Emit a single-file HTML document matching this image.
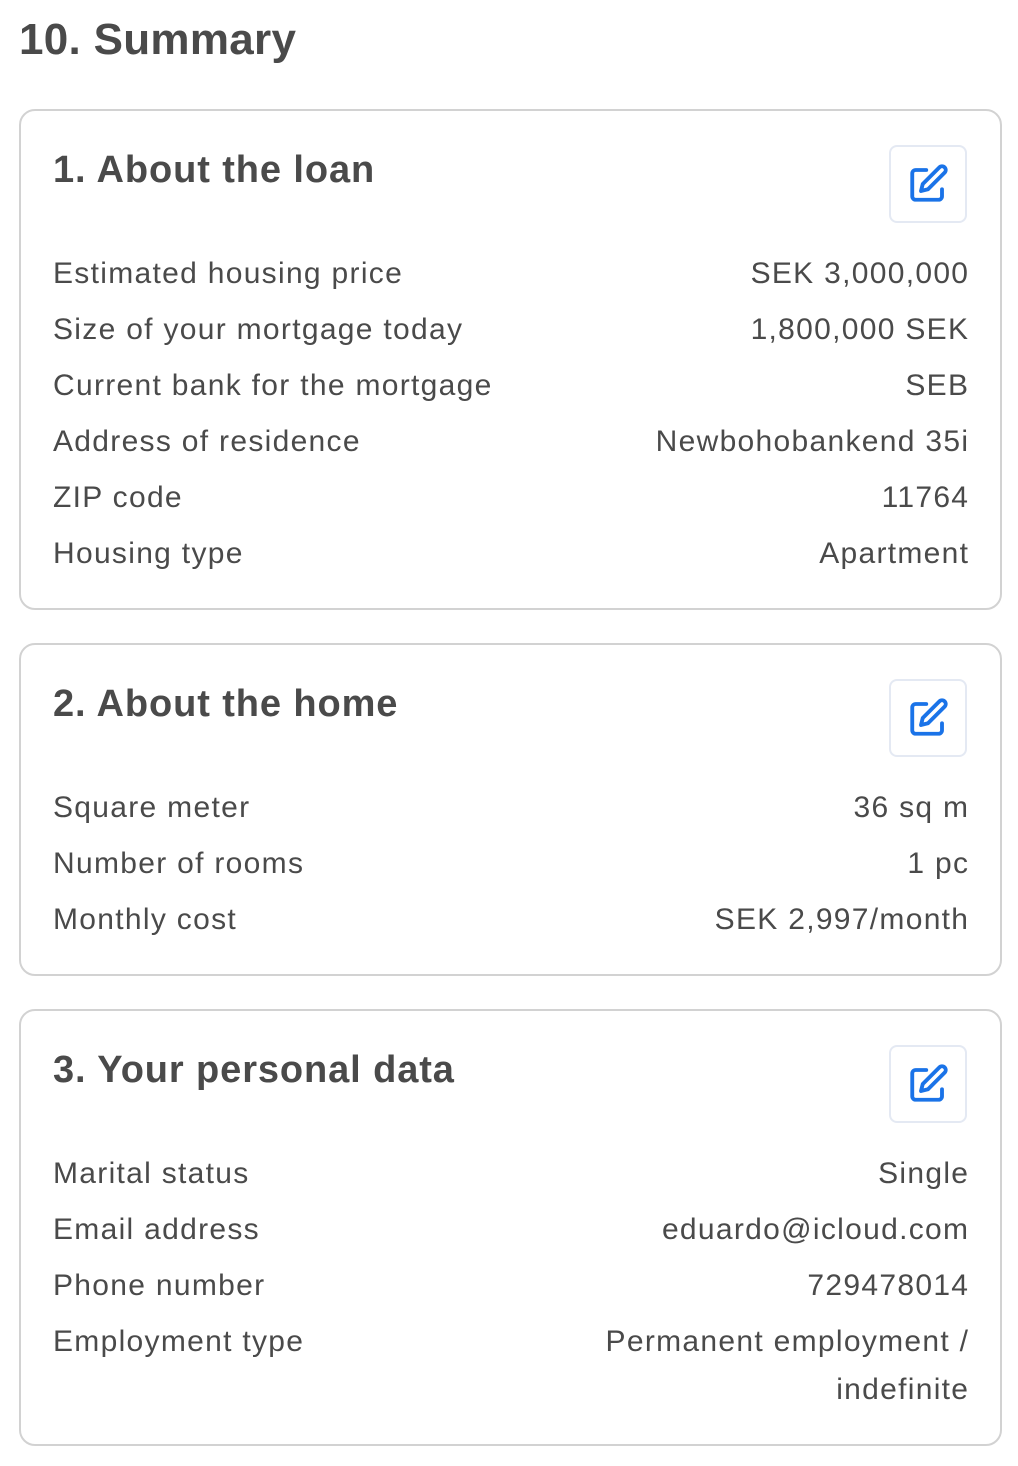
<!DOCTYPE html>
<html><head><meta charset="utf-8"><style>
body{margin:0;width:1018px;height:1466px;background:#fff;font-family:"Liberation Sans",sans-serif;color:#4a4a4a;position:relative;overflow:hidden}
h1{position:absolute;left:19px;top:12px;margin:0;font-size:44px;font-weight:bold;letter-spacing:0.3px;line-height:56px}
.card{position:absolute;left:19px;width:983px;border:2px solid #d2d2d2;border-radius:16px;box-sizing:border-box}
.card h2{position:absolute;left:32px;top:36px;margin:0;font-size:38px;font-weight:bold;line-height:46px;letter-spacing:0.9px}
.btn{position:absolute;left:868px;top:34px;width:78px;height:78px;border:2px solid #e4e9f3;border-radius:8px;box-sizing:border-box;display:flex;align-items:center;justify-content:center}
.row{position:absolute;left:32px;right:32px;display:flex;justify-content:space-between;font-size:30px;line-height:48px;letter-spacing:1.3px}
.row span:last-child{text-align:right;margin-right:-1.3px}
</style></head><body>
<h1>10. Summary</h1>

<div class="card" style="top:109px;height:501px">
<h2>1. About the loan</h2>
<div class="btn"><svg width="42" height="42" viewBox="0 0 24 24" fill="none" stroke="#1a73e8" stroke-width="2.2" stroke-linecap="round" stroke-linejoin="round"><path d="M11 4H5a2 2 0 0 0-2 2v13a2 2 0 0 0 2 2h13a2 2 0 0 0 2-2v-4"/><path d="M18.5 2.5a2.1 2.1 0 0 1 3 3L12 15l-4 1 1-4z"/></svg></div>
<div class="row" style="top:139px"><span>Estimated housing price</span><span>SEK 3,000,000</span></div>
<div class="row" style="top:195px"><span>Size of your mortgage today</span><span>1,800,000 SEK</span></div>
<div class="row" style="top:251px"><span>Current bank for the mortgage</span><span>SEB</span></div>
<div class="row" style="top:307px"><span>Address of residence</span><span>Newbohobankend 35i</span></div>
<div class="row" style="top:363px"><span>ZIP code</span><span>11764</span></div>
<div class="row" style="top:419px"><span>Housing type</span><span>Apartment</span></div>
</div>

<div class="card" style="top:643px;height:333px">
<h2>2. About the home</h2>
<div class="btn"><svg width="42" height="42" viewBox="0 0 24 24" fill="none" stroke="#1a73e8" stroke-width="2.2" stroke-linecap="round" stroke-linejoin="round"><path d="M11 4H5a2 2 0 0 0-2 2v13a2 2 0 0 0 2 2h13a2 2 0 0 0 2-2v-4"/><path d="M18.5 2.5a2.1 2.1 0 0 1 3 3L12 15l-4 1 1-4z"/></svg></div>
<div class="row" style="top:139px"><span>Square meter</span><span>36 sq m</span></div>
<div class="row" style="top:195px"><span>Number of rooms</span><span>1 pc</span></div>
<div class="row" style="top:251px"><span>Monthly cost</span><span>SEK 2,997/month</span></div>
</div>

<div class="card" style="top:1009px;height:437px">
<h2>3. Your personal data</h2>
<div class="btn"><svg width="42" height="42" viewBox="0 0 24 24" fill="none" stroke="#1a73e8" stroke-width="2.2" stroke-linecap="round" stroke-linejoin="round"><path d="M11 4H5a2 2 0 0 0-2 2v13a2 2 0 0 0 2 2h13a2 2 0 0 0 2-2v-4"/><path d="M18.5 2.5a2.1 2.1 0 0 1 3 3L12 15l-4 1 1-4z"/></svg></div>
<div class="row" style="top:139px"><span>Marital status</span><span>Single</span></div>
<div class="row" style="top:195px"><span>Email address</span><span>eduardo@icloud.com</span></div>
<div class="row" style="top:251px"><span>Phone number</span><span>729478014</span></div>
<div class="row" style="top:307px"><span>Employment type</span><span>Permanent employment /<br>indefinite</span></div>
</div>
</body></html>
